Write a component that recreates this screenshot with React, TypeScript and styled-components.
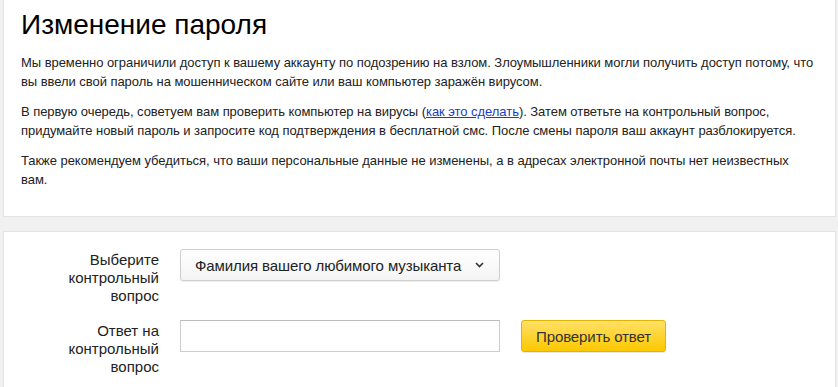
import styled, { createGlobalStyle } from 'styled-components';

const GlobalStyle = createGlobalStyle`
    html, body {
        margin: 0;
        padding: 0;
        background: #f1f1f1;
        font-family: "Liberation Sans", Arial, sans-serif;
        color: #000;
    }
`;

const Page = styled.div`
    display: flex;
    flex-direction: column;
    gap: 14px;
    padding: 0 2px 0 3px;
`;

const Card = styled.section`
    background: #fff;
    border: 1px solid #e3e3e3;
`;

const InfoCard = styled(Card)`
    margin-top: -1px;
    padding: 5px 20px 27px 17px;
`;

const Title = styled.h1`
    font-size: 28px;
    font-weight: normal;
    line-height: 40px;
    margin: 0 0 8px;
    color: #000;
`;

const Text = styled.p`
    font-size: 13px;
    line-height: 19px;
    letter-spacing: -0.05px;
    margin: 0 0 11px;
    color: #222;

    &:last-child {
        margin-bottom: 0;
    }
`;

const HelpLink = styled.a`
    color: #1a3dc1;
    text-decoration: underline;
`;

const FormCard = styled(Card)`
    padding: 17px 0 40px;
    display: grid;
    grid-template-columns: 155px auto auto 1fr;
    column-gap: 21px;
    row-gap: 15px;
    align-items: start;
`;

const Label = styled.label`
    grid-column: 1;
    text-align: right;
    font-size: 15px;
    line-height: 18px;
    color: #222;
    padding-top: 2px;
`;

const SelectButton = styled.button`
    grid-column: 2 / span 2;
    justify-self: start;
    width: 320px;
    height: 32px;
    display: flex;
    align-items: center;
    justify-content: space-between;
    white-space: nowrap;
    padding: 0 15px 0 14px;
    border: 1px solid #cfcfcf;
    border-radius: 3px;
    background: linear-gradient(#fff, #f4f4f4);
    box-shadow: 0 1px 1px rgba(0, 0, 0, 0.08);
    font-family: inherit;
    font-size: 15px;
    letter-spacing: -0.1px;
    color: #222;
`;

const Chevron = styled.svg`
    width: 9px;
    height: 6px;
    flex: none;
`;

const AnswerInput = styled.input`
    grid-column: 2;
    width: 320px;
    height: 32px;
    box-sizing: border-box;
    border: 1px solid #cdcdcd;
    border-top-color: #bcbcbc;
    background: #fff;
    font-family: inherit;
    font-size: 15px;
    padding: 0 8px;
`;

const CheckButton = styled.button`
    grid-column: 3;
    height: 32px;
    white-space: nowrap;
    padding: 0 14px;
    border: 1px solid #e0b400;
    border-radius: 3px;
    background: linear-gradient(#ffe066, #fcc800);
    box-shadow: 0 1px 1px rgba(0, 0, 0, 0.1);
    font-family: inherit;
    font-size: 15px;
    letter-spacing: -0.1px;
    color: #333;
`;

export default function App() {
    return <>
        <GlobalStyle />
        <Page>
            <InfoCard>
                <Title>Изменение пароля</Title>
                <Text>
                    Мы временно ограничили доступ к вашему аккаунту по подозрению на взлом. Злоумышленники могли получить доступ потому, что вы ввели свой пароль на мошенническом сайте или ваш компьютер заражён вирусом.
                </Text>
                <Text>
                    В первую очередь, советуем вам проверить компьютер на вирусы (<HelpLink href="#">как это сделать</HelpLink>). Затем ответьте на контрольный вопрос, придумайте новый пароль и запросите код подтверждения в бесплатной смс. После смены пароля ваш аккаунт разблокируется.
                </Text>
                <Text>
                    Также рекомендуем убедиться, что ваши персональные данные не изменены, а в адресах электронной почты нет неизвестных вам.
                </Text>
            </InfoCard>
            <FormCard>
                <Label>Выберите<br />контрольный<br />вопрос</Label>
                <SelectButton>
                    Фамилия вашего любимого музыканта
                    <Chevron viewBox="0 0 9 6">
                        <path d="M1 1l3.5 3.5L8 1" fill="none" stroke="#333" strokeWidth="1.6" />
                    </Chevron>
                </SelectButton>
                <Label>Ответ на<br />контрольный<br />вопрос</Label>
                <AnswerInput type="text" />
                <CheckButton>Проверить ответ</CheckButton>
            </FormCard>
        </Page>
    </>;
}
